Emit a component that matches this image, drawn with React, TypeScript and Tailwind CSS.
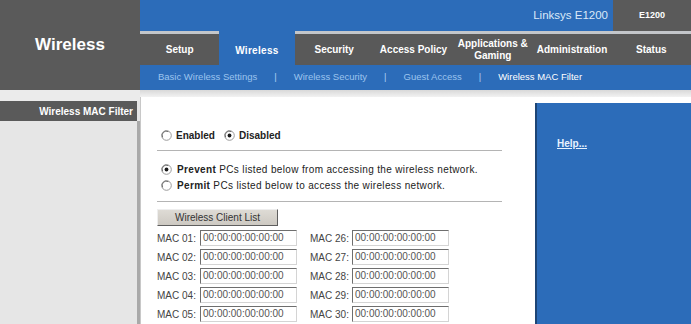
import React from 'react';

const tabs = ['Setup', 'Wireless', 'Security', 'Access Policy', 'Applications & Gaming', 'Administration', 'Status'];

const subnav = ['Basic Wireless Settings', 'Wireless Security', 'Guest Access', 'Wireless MAC Filter'];

function Radio({ checked }: { checked?: boolean }) {
  return (
    <svg width="11" height="11" viewBox="0 0 11 11" className="shrink-0">
      <circle cx="5.5" cy="5.5" r="4.8" fill="#fff" stroke="#9a9a9a" strokeWidth="1" />
      <path d="M1.6 7.4 A4.3 4.3 0 0 1 7.4 1.6" fill="none" stroke="#6a6a6a" strokeWidth="1" />
      {checked && <circle cx="5.5" cy="5.5" r="1.9" fill="#1a1a1a" />}
    </svg>
  );
}

function MacInput() {
  return (
    <div className="flex h-[16px] w-[97px] items-center border border-t-[#6e6e6e] border-l-[#6e6e6e] border-r-[#d4d4d4] border-b-[#d4d4d4] bg-white pl-[2px] text-[10px] leading-none text-[#555]">
      00:00:00:00:00:00
    </div>
  );
}

export default function App() {
  const rows = [
    ['01', '26'],
    ['02', '27'],
    ['03', '28'],
    ['04', '29'],
    ['05', '30'],
  ];

  return (
    <div className="h-[324px] w-[691px] overflow-hidden bg-white font-['Liberation_Sans',Arial,sans-serif]">
      {/* header */}
      <div className="flex h-[90px]">
        <div className="flex w-[140px] items-center justify-center bg-[#5a5a5a] pb-[1px] text-[17px] font-bold text-white">
          Wireless
        </div>
        <div className="flex flex-1 flex-col">
          <div className="flex h-[31px]">
            <div className="flex flex-1 items-center justify-end bg-[#2c6cb9] pr-[5px] text-[11.5px] text-[#dbe9f8]">
              Linksys E1200
            </div>
            <div className="flex w-[78px] items-center justify-center bg-[#5a5a5a] text-[9px] font-bold text-white">
              E1200
            </div>
          </div>
          <div className="flex h-[34px]">
            {tabs.map((t) =>
              t === 'Wireless' ? (
                <div key={t} className="flex flex-1 items-center justify-center bg-[#2c6cb9] pt-[4px] text-[10px] font-bold tracking-[0.3px] text-white">
                  {t}
                </div>
              ) : (
                <div
                  key={t}
                  className="flex flex-1 items-center justify-center border-t-[3px] border-[#c3c6ca] bg-[#595959] px-[2px] text-center text-[10px] font-bold leading-[12px] text-white"
                >
                  {t === 'Applications & Gaming' ? (
                    <span>
                      Applications &amp;
                      <br />
                      Gaming
                    </span>
                  ) : (
                    t
                  )}
                </div>
              ),
            )}
          </div>
          <div className="flex h-[25px] items-center gap-[17px] bg-[#2c6cb9] pl-[18px] text-[9.5px]">
            {subnav.map((s, i) => (
              <React.Fragment key={s}>
                {i > 0 && <span className="text-[#a9cdf2]">|</span>}
                <span className={i === 3 ? 'text-white' : 'text-[#9cc4ee]'}>{s}</span>
              </React.Fragment>
            ))}
          </div>
        </div>
      </div>

      {/* body */}
      <div className="flex h-[234px]">
        <div className="flex w-[140px] flex-col bg-[#e6e6e6]">
          <div className="h-[11px] bg-[#ebebeb]" />
          <div className="flex h-[20px] w-[137px] items-center justify-end bg-[#5a5a5a] pr-[4px] text-[10px] font-bold text-white">
            Wireless MAC Filter
          </div>
          <div className="flex flex-1 justify-end">
            <div className="w-[3px] bg-[#a9a9a9]" />
          </div>
        </div>

        <div className="flex flex-1 flex-col">
          <div className="h-[7px] bg-gradient-to-b from-[#d9d9d9] to-[#f2f2f2]" />
          <div className="flex flex-1">
            <div className="flex w-[395px] flex-col border-l border-[#c8c8c8] pl-[16px] text-[10px] text-[#222]">
              <div className="mt-[31px] flex h-[14px] items-center pl-[4px]">
                <Radio />
                <span className="ml-[4px] font-bold">Enabled</span>
                <span className="ml-[9px]">
                  <Radio checked />
                </span>
                <span className="ml-[4px] font-bold">Disabled</span>
              </div>
              <div className="mt-[8px] h-[1px] w-[345px] bg-[#b4b4b4]" />
              <div className="mt-[11px] flex h-[14px] items-center pl-[4px]">
                <Radio checked />
                <span className="ml-[5px] tracking-[0.35px]">
                  <b>Prevent</b> PCs listed below from accessing the wireless network.
                </span>
              </div>
              <div className="mt-[2px] flex h-[14px] items-center pl-[4px]">
                <Radio />
                <span className="ml-[5px] tracking-[0.35px]">
                  <b>Permit</b> PCs listed below to access the wireless network.
                </span>
              </div>
              <div className="mt-[9px] h-[1px] w-[345px] bg-[#b4b4b4]" />
              <div className="mt-[7px] flex h-[17px] w-[121px] items-center justify-center border border-t-[#eeeeee] border-l-[#eeeeee] border-r-[#5e5e5e] border-b-[#5e5e5e] bg-gradient-to-b from-[#dedbd5] to-[#cdc9c2] text-[10px] text-[#333]">
                Wireless Client List
              </div>
              <div className="mt-[4px] flex flex-col gap-[3px]">
                {rows.map(([a, b]) => (
                  <div key={a} className="flex h-[16px] items-center text-[#444]">
                    <span className="w-[43px]">MAC {a}:</span>
                    <MacInput />
                    <span className="ml-[13px] w-[42px]">MAC {b}:</span>
                    <MacInput />
                  </div>
                ))}
              </div>
            </div>
            <div className="flex flex-1 flex-col pt-[6px]">
              <div className="flex-1 border-l-[2px] border-[#1d4575] bg-[#2c6cb9] pl-[20px] pt-[27px]">
                <span className="text-[10px] font-bold text-[#e6f2ff] underline">Help...</span>
              </div>
            </div>
          </div>
        </div>
      </div>
    </div>
  );
}
